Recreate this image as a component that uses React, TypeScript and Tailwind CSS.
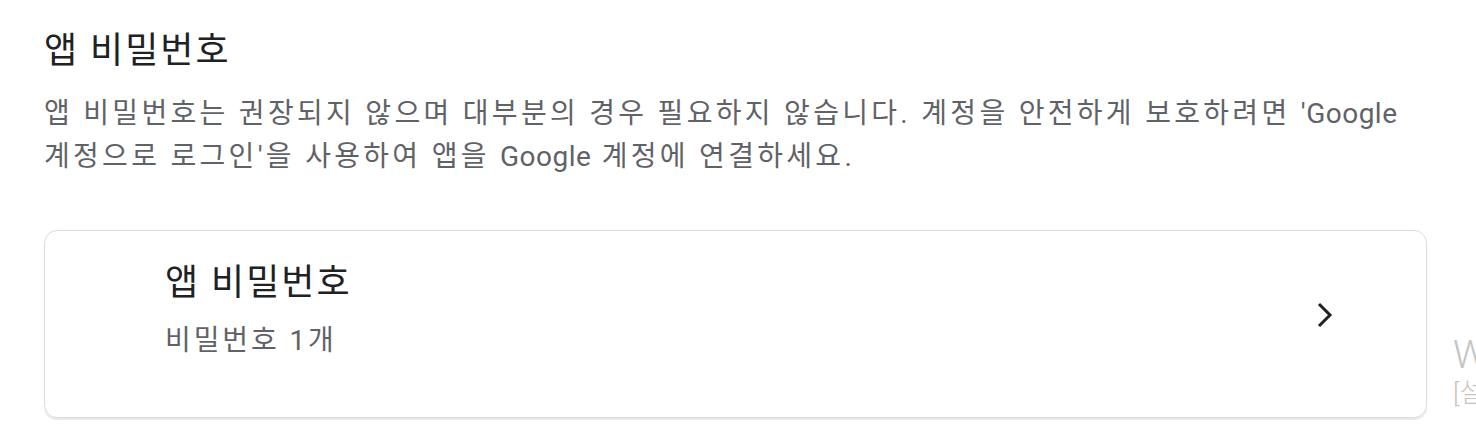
export default function App() {
  return (
    <div
      className="relative h-[437px] w-[1476px] overflow-hidden bg-white"
      style={{ fontFamily: 'Roboto, "Noto Sans CJK KR", sans-serif' }}
    >
      <div className="pl-[44px] pt-[31px] pr-[49px]">
        <h2 className="text-[36px] leading-[41px] tracking-[2px] text-[#202124]">앱 비밀번호</h2>
        <p className="mt-[20px] whitespace-nowrap text-[28px] leading-[43px] tracking-[3.3px] text-[#5f6368]">
          앱 비밀번호는 권장되지 않으며 대부분의 경우 필요하지 않습니다. 계정을 안전하게 보호하려면{" "}
          <span className="tracking-[0.5px]">'Google</span>
          <br />
          계정으로 로그인'을 사용하여 앱을 <span className="tracking-[0.5px]">Google</span> 계정에 연결하세요.
        </p>

        <div className="mt-[52px] flex h-[188px] items-start rounded-[13px] border border-[#dadce0] pl-[120px] pr-[90px] pt-[32px] shadow-[0_2px_1px_rgba(60,64,67,0.12)]">
          <div className="flex-1">
            <div className="text-[36px] leading-[41px] tracking-[2px] text-[#202124]">앱 비밀번호</div>
            <div className="mt-[20px] text-[28px] leading-[34px] tracking-[2.9px] text-[#5f6368]">비밀번호 1개</div>
          </div>
          <svg className="mt-[35px]" width="22" height="34" viewBox="0 0 22 34" fill="none">
            <path d="M5 6 L16 17 L5 28" stroke="#202124" strokeWidth="3" />
          </svg>
        </div>
      </div>

      {/* windows watermark, cut off at the edge */}
      <div className="absolute left-[1453px] top-[333px] text-[#c4c4c4]">
        <div className="text-[38px] font-light leading-[44px]">W</div>
        <div className="text-[26px] font-light leading-[32px]">[설</div>
      </div>
    </div>
  );
}
